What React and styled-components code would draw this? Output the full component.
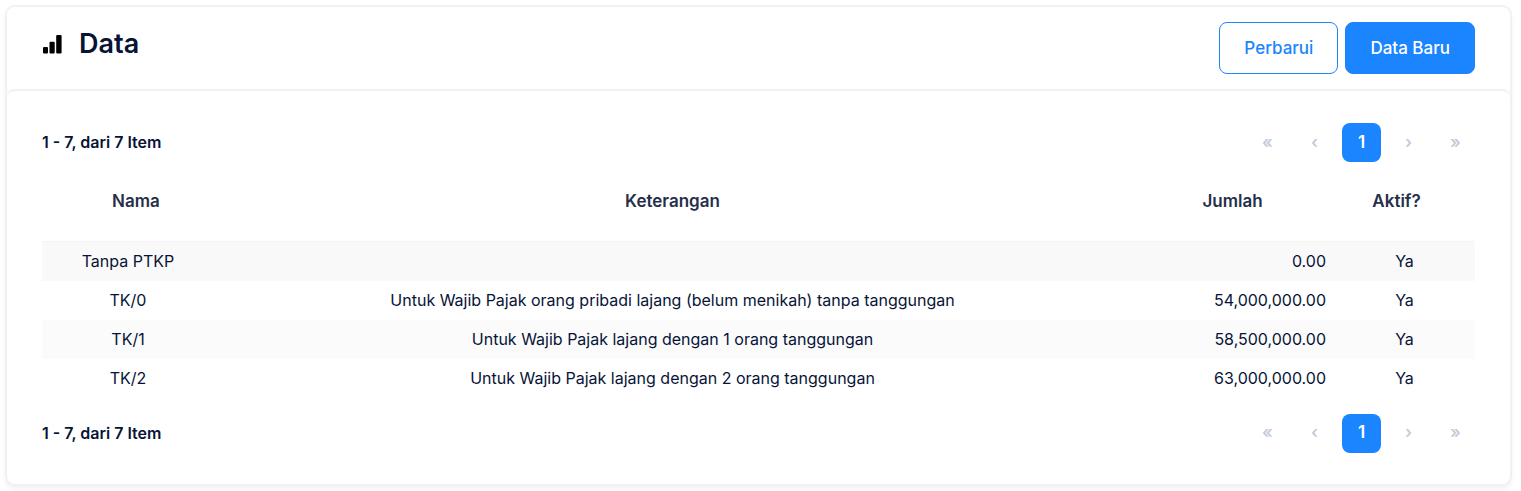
import React from 'react'
import styled, { createGlobalStyle, css } from 'styled-components'

const rows = [
  { nama: 'Tanpa PTKP', keterangan: '', jumlah: '0.00', aktif: 'Ya' },
  {
    nama: 'TK/0',
    keterangan: 'Untuk Wajib Pajak orang pribadi lajang (belum menikah) tanpa tanggungan',
    jumlah: '54,000,000.00',
    aktif: 'Ya'
  },
  {
    nama: 'TK/1',
    keterangan: 'Untuk Wajib Pajak lajang dengan 1 orang tanggungan',
    jumlah: '58,500,000.00',
    aktif: 'Ya'
  },
  {
    nama: 'TK/2',
    keterangan: 'Untuk Wajib Pajak lajang dengan 2 orang tanggungan',
    jumlah: '63,000,000.00',
    aktif: 'Ya'
  }
]

const Pager = () => (
  <PagerRow>
    <Summary>1 - 7, dari 7 Item</Summary>
    <Pages aria-label="Halaman">
      <PageButton disabled aria-label="Pertama">«</PageButton>
      <PageButton disabled aria-label="Sebelumnya">‹</PageButton>
      <PageButton $active aria-current="page">1</PageButton>
      <PageButton disabled aria-label="Berikutnya">›</PageButton>
      <PageButton disabled aria-label="Terakhir">»</PageButton>
    </Pages>
  </PagerRow>
)

const BarsIcon = () => (
  <svg width="20" height="20" viewBox="0 0 20 20" aria-hidden="true">
    <rect x="1" y="13" width="5" height="6.5" rx="1" />
    <rect x="7.5" y="7.7" width="5.2" height="11.8" rx="1" />
    <rect x="14.2" y="1" width="5.4" height="18.5" rx="1" />
  </svg>
)

export default () => (
  <>
    <GlobalStyle />
    <Card>
      <Header>
        <Heading>
          <BarsIcon />
          <Title>Data</Title>
        </Heading>
        <Actions>
          <Button>Perbarui</Button>
          <Button $primary>Data Baru</Button>
        </Actions>
      </Header>
      <Body>
        <Pager />
        <Table>
          <colgroup>
            <Col $width="12%" />
            <Col $width="64%" />
            <Col />
            <Col $width="141px" />
          </colgroup>
          <thead>
            <tr>
              <Th scope="col">Nama</Th>
              <Th scope="col">Keterangan</Th>
              <Th scope="col">Jumlah</Th>
              <Th scope="col">Aktif?</Th>
            </tr>
          </thead>
          <tbody>
            {rows.map(row => (
              <Row key={row.nama}>
                <Td>{row.nama}</Td>
                <Td>{row.keterangan}</Td>
                <Td $align="right">{row.jumlah}</Td>
                <Td>{row.aktif}</Td>
              </Row>
            ))}
          </tbody>
        </Table>
        <Pager />
      </Body>
    </Card>
  </>
)

const GlobalStyle = createGlobalStyle`
  * {
    box-sizing: border-box;
  }
  body {
    margin: 0;
    padding: 5px 9px 5px 5px;
    background: #fff;
    color: #071437;
    font-family: Inter, "Liberation Sans", sans-serif;
    font-size: 16px;
    line-height: 23px;
  }
`

const Card = styled.section`
  border: 2px solid #f1f1f2;
  border-radius: 10px;
  background: #fcfcfc;
  box-shadow: 0 3px 4px rgba(0, 0, 0, .05);
`

const Header = styled.header`
  display: flex;
  align-items: flex-start;
  justify-content: space-between;
  padding: 15px 35px;
  background: #fff;
  border-radius: 8px 8px 0 0;
`

const Heading = styled.div`
  display: flex;
  align-items: center;
  gap: 17px;
`

const Title = styled.h1`
  margin: 0;
  font-size: 27px;
  font-weight: 600;
  line-height: 44px;
`

const Actions = styled.div`
  display: flex;
  gap: 7px;
`

const Button = styled.button`
  height: 52px;
  padding: 0 24px;
  border: 1px solid #1b84ff;
  border-radius: 8px;
  background: #fff;
  color: #1b84ff;
  font: 500 17px/24px Inter, sans-serif;
  cursor: pointer;

  ${ ({ $primary }) => $primary && css`
    background: #1b84ff;
    color: #fff;
  ` }
`

const Body = styled.div`
  padding: 32px 35px 31px;
  border-top: 2px solid #f1f1f2;
  border-radius: 8px;
  background: #fff;
`

const PagerRow = styled.div`
  display: flex;
  align-items: center;
  justify-content: space-between;
`

const Summary = styled.strong`
  font-weight: 600;
`

const Pages = styled.nav`
  display: flex;
  gap: 8px;
`

const PageButton = styled.button`
  width: 39px;
  height: 39px;
  padding: 0 0 2px;
  border: 0;
  border-radius: 8px;
  background: transparent;
  color: #c4cada;
  font: 600 17px/24px Inter, sans-serif;

  ${ ({ $active }) => $active && css`
    background: #1b84ff;
    color: #fff;
    cursor: pointer;
  ` }
`

const Table = styled.table`
  width: 100%;
  margin-bottom: 16px;
  table-layout: fixed;
  border-collapse: collapse;
`

const Col = styled.col`
  width: ${ ({ $width }) => $width || 'auto' };
`

const Th = styled.th`
  height: 79px;
  padding: 0 8px;
  border-bottom: 1px solid #f4f4f5;
  color: #252f4a;
  font-size: 17px;
  font-weight: 600;

  &:first-child {
    padding-left: 24px;
  }
  &:last-child {
    padding-right: 24px;
  }
`

const Row = styled.tr`
  &:nth-child(odd) {
    background: #fbfbfb;
  }
  &:first-child {
    background: #f9f9f9;
  }
`

const Td = styled.td`
  padding: 8px;
  text-align: ${ ({ $align }) => $align || 'center' };
`
